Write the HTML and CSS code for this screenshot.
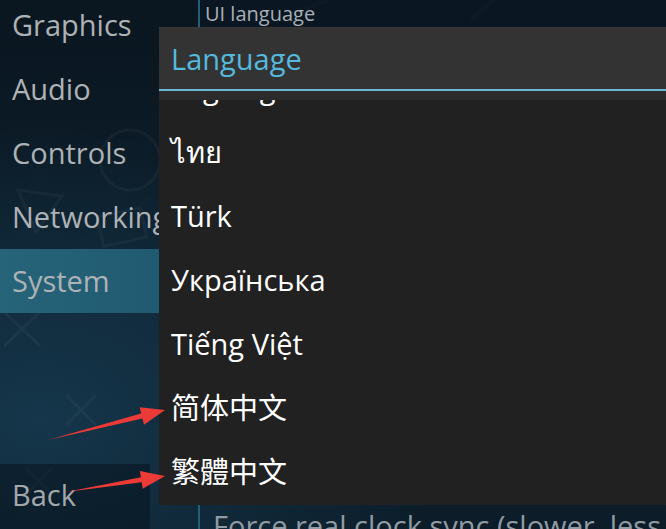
FILE: index.html
```html
<!DOCTYPE html>
<html>
<head>
    <title>Settings - System</title>
    <link rel="stylesheet" href="styles.css">
</head>
<body>
    <svg class="bgShapes" width="666" height="529" viewBox="0 0 666 529">
        <circle cx="130" cy="160" r="30"/>
        <path d="M18 190 L62 196 L36 232 Z"/>
        <rect x="100" y="212" width="44" height="30" transform="rotate(-12 122 227)"/>
        <path d="M4 312 L40 346 M40 312 L4 346"/>
        <path d="M66 395 L96 425 M96 395 L66 425"/>
        <path d="M26 468 L52 494 M52 468 L26 494"/>
        <path d="M300 10 L330 0 M470 20 L500 -5"/>
    </svg>

    <div class="screen">
        <nav class="sidebar">
            <ul class="tabs">
                <li>Graphics</li>
                <li>Audio</li>
                <li>Controls</li>
                <li>Networking</li>
                <li class="active">System</li>
            </ul>
            <div class="back">Back</div>
        </nav>
        <main class="settings">
            <div class="settingHeader">UI language</div>
            <div class="settingRow">Force real clock sync (slower, less lag)</div>
        </main>
    </div>

    <div class="popup">
        <div class="popupTitle">Language</div>
        <div class="popupStrip"></div>
        <ul class="langList">
            <li>Tagalog</li>
            <li class="thai">ไทย</li>
            <li>Türk</li>
            <li>Українська</li>
            <li>Tiếng Việt</li>
            <li lang="zh-CN">简体中文</li>
            <li lang="zh-TW">繁體中文</li>
        </ul>
    </div>

    <!-- red arrows pasted over the screenshot -->
    <svg class="arrows" width="666" height="529" viewBox="0 0 666 529">
        <polygon points="48,440 141.2,413.6 139.6,407.3 165,410 144,424.7 142.4,418.4"/>
        <polygon points="66,492 140.9,477.3 139.9,470.9 165,476 142.7,488.7 141.7,482.3"/>
    </svg>
</body>
</html>
```

FILE: styles.css
```css
* {
    box-sizing: border-box;
}

body {
    margin: 0;
    padding: 0;
    width: 666px;
    height: 529px;
    overflow: hidden;
    position: relative;
    font-family: "Open Sans", "Noto Sans", "Noto Sans CJK SC", sans-serif;
    background:
        radial-gradient(ellipse 420px 300px at 40px 420px, #15364b 0%, rgba(21, 54, 75, 0) 100%),
        linear-gradient(180deg, #0a1620 0%, #0d1f2c 60%, #0c1c28 100%);
}

ul {
    list-style: none;
    margin: 0;
    padding: 0;
}

.bgShapes {
    position: absolute;
    left: 0;
    top: 0;
    fill: none;
    stroke: rgba(255, 255, 255, 0.04);
    stroke-width: 3;
}

.screen {
    position: relative;
    display: grid;
    grid-template-columns: 198px 1fr;
    height: 529px;
}

.sidebar {
    display: flex;
    flex-direction: column;
    justify-content: space-between;
    overflow: hidden;
}

.tabs {
    margin-top: -7px;
}

.tabs li {
    height: 64px;
    width: 160px;
    padding-left: 12px;
    line-height: 64px;
    font-size: 29px;
    color: #aeb2b5;
    white-space: nowrap;
}

.tabs li.active {
    background: linear-gradient(90deg, #266479 0%, #205a70 100%);
}

.back {
    height: 65px;
    width: 150px;
    padding-left: 12px;
    line-height: 62px;
    font-size: 29px;
    color: #a3a8ab;
    background-color: rgba(5, 14, 22, 0.45);
}

.settings {
    display: flex;
    flex-direction: column;
    justify-content: space-between;
    border-left: 2px solid #245f79;
    overflow: hidden;
}

.settingHeader {
    height: 27px;
    padding-left: 5px;
    font-size: 20px;
    line-height: 27px;
    color: #a9b0b5;
    background-color: rgba(10, 24, 36, 0.6);
}

.settingRow {
    height: 24px;
    padding: 6px 0 0 13px;
    font-size: 29px;
    line-height: 1;
    color: #8f9aa2;
    white-space: nowrap;
    overflow: hidden;
}

.popup {
    position: absolute;
    left: 159px;
    top: 27px;
    width: 507px;
    height: 478px;
    display: flex;
    flex-direction: column;
    background-color: #212121;
    overflow: hidden;
}

.popupTitle {
    flex: none;
    height: 64px;
    padding-left: 12px;
    line-height: 62px;
    font-size: 29px;
    color: #54b9dd;
    background-color: #333333;
    border-top: 1px solid #3a3632;
    border-bottom: 2px solid #6cb7d3;
}

.popupStrip {
    flex: none;
    height: 9px;
    background-color: #2b2b2b;
}

.langList {
    flex: 1;
    min-height: 0;
    overflow: hidden;
}

.langList li {
    height: 64px;
    padding-left: 12px;
    line-height: 64px;
    font-size: 29px;
    color: #ffffff;
}

.langList li:first-child {
    margin-top: -44px;
}

.arrows {
    position: absolute;
    left: 0;
    top: 0;
    fill: #ec3a36;
}
```
